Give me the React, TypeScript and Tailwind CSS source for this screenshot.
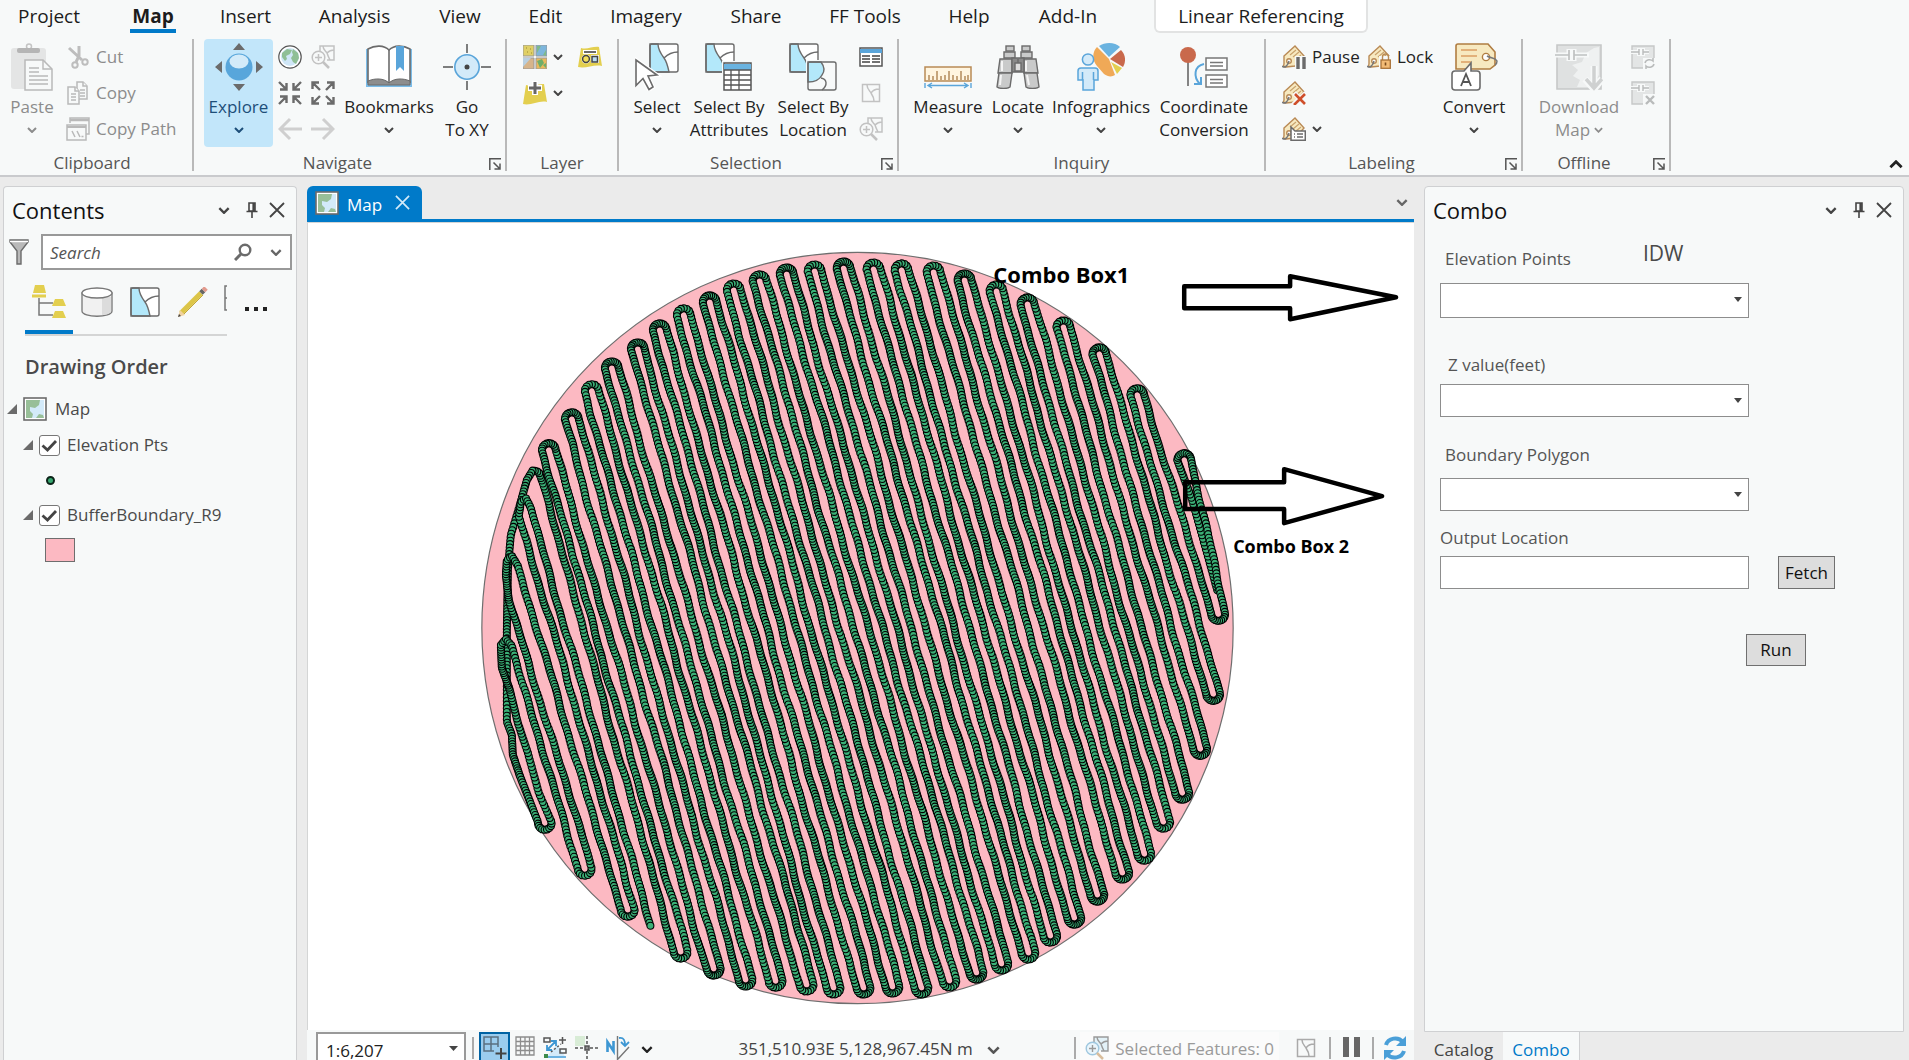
import { ReactNode, useState } from 'react';

/* ---------- small shared glyphs ---------- */

function Chevron({ className = 'w-[10px] h-[6px] text-[#444]' }: { className?: string }) {
  return (
    <svg className={className} viewBox="0 0 10 6" fill="none" stroke="currentColor" strokeWidth="2">
      <path d="M1 1l4 4 4-4" />
    </svg>
  );
}

function Pin() {
  return (
    <svg className="w-3 h-4" viewBox="0 0 12 16" fill="none" stroke="#444" strokeWidth="1.6">
      <path d="M3 1h6v8H3zM0.5 9.5h11M6 10v6" />
      <path d="M7.6 1v8" strokeWidth="2.4" />
    </svg>
  );
}

function Cross({ className = 'w-4 h-4 text-[#444]' }: { className?: string }) {
  return (
    <svg className={className} viewBox="0 0 16 16" fill="none" stroke="currentColor" strokeWidth="1.8">
      <path d="M1 1l14 14M15 1L1 15" />
    </svg>
  );
}

function Launcher() {
  return (
    <svg className="w-3 h-3" viewBox="0 0 12 12" fill="none" stroke="#555" strokeWidth="1.5">
      <path d="M0.8 12V0.8H12M4.5 4.5l6 6M11 5.5V11H5.5" />
    </svg>
  );
}

/* ---------- ribbon icons ---------- */

function PasteIcon() {
  return (
    <svg className="w-[42px] h-12" viewBox="0 0 42 48" fill="none">
      <rect x="0" y="5" width="35" height="41" rx="3" fill="#e4e5e5" />
      <circle cx="18" cy="3.500" r="2.500" stroke="#c4c4c4" strokeWidth="1.5" />
      <rect x="6" y="5" width="23" height="5" rx="2" fill="#b5b5b5" />
      <path d="M14 17h18l9 9v21H14z" fill="#f7f9f9" stroke="#b9b9b9" strokeWidth="1.5" />
      <path d="M32 17v9h9M18 25h10M18 29h10M18 33h19M18 37h19M18 41h19" stroke="#b9b9b9" strokeWidth="1.4" />
    </svg>
  );
}

function CutIcon() {
  return (
    <svg className="w-6 h-6" viewBox="0 0 24 24" fill="none" stroke="#bdbdbd" strokeWidth="2">
      <path d="M3 3l13 12M13 1v10l-3 6" strokeWidth="3" />
      <circle cx="9" cy="20" r="2.700" />
      <circle cx="19" cy="17" r="2.700" />
    </svg>
  );
}

function CopyIcon() {
  return (
    <svg className="w-6 h-6" viewBox="0 0 24 24" fill="#f7f9f9" stroke="#b9b9b9" strokeWidth="1.5">
      <path d="M11 1h6l4 4v13H11z" />
      <path d="M17 1v4h4M14 9h5M14 12h5M14 15h5" />
      <path d="M2 6h7l4 4v13H2z" />
      <path d="M9 6v4h4M5 13h5M5 16h5M5 19h5" />
    </svg>
  );
}

function CopyPathIcon() {
  return (
    <svg className="w-6 h-6" viewBox="0 0 24 24" fill="#f7f9f9" stroke="#b9b9b9" strokeWidth="1.5">
      <path d="M4 6V1h19v16h-3" />
      <path d="M4 3h19" strokeWidth="2.500" />
      <rect x="1" y="8" width="19" height="15" />
      <path d="M1 10h19" strokeWidth="2" />
      <path d="M6 14l3 6M11 14l3 6M15.500 19.500h2" />
    </svg>
  );
}

function ExploreIcon() {
  return (
    <svg className="w-12 h-12" viewBox="0 0 48 48">
      <path d="M24 0l6 7H18zM24 48l6-7H18zM0 24l7-6v12zM48 24l-7-6v12z" fill="#6b6b6b" />
      <circle cx="24" cy="24" r="13.500" fill="#58a6db" />
      <ellipse cx="24" cy="18.500" rx="9.500" ry="7" fill="#d3ebf9" />
    </svg>
  );
}

function GlobeIcon() {
  return (
    <svg className="w-6 h-6" viewBox="0 0 24 24">
      <circle cx="12" cy="12" r="11.200" fill="#fff" stroke="#555" strokeWidth="1.2" />
      <circle cx="12" cy="12" r="9" fill="#cfe6f7" />
      <path d="M4 8l5-4 5 1-2 4-4 2 1 3-2 2-3-4zM15 4l5 4 1 5-3 6-3-2-2-4 2-3-1-3z" fill="#8fbf95" />
    </svg>
  );
}

function ZoomSelIcon({ tint = '#c2c2c2' }: { tint?: string }) {
  return (
    <svg className="w-6 h-6" viewBox="0 0 24 24" fill="none" stroke={tint} strokeWidth="1.5">
      <path d="M9 7V1h14v14h-7M12 1c0 4 3 5 4 7 1 3 2 5 3 7M16 8c2-2 4-3 7-3" />
      <circle cx="7.500" cy="12.500" r="6.300" />
      <path d="M4 12.500h7M7.500 9v7" />
      <path d="M12 17l6 6" strokeWidth="2.500" />
    </svg>
  );
}

function ArrowsIn() {
  return (
    <svg className="w-6 h-6" viewBox="0 0 24 24" fill="none" stroke="#6b6b6b" strokeWidth="2.400">
      <path d="M1 1l7 7M8.500 2v6.500H2M23 1l-7 7M15.500 2v6.500H22M1 23l7-7M8.500 22v-6.500H2M23 23l-7-7M15.500 22v-6.500H22" />
    </svg>
  );
}

function ArrowsOut() {
  return (
    <svg className="w-6 h-6" viewBox="0 0 24 24" fill="none" stroke="#6b6b6b" strokeWidth="2.400">
      <path d="M2 2l7 7M1.500 8V1.500H8M22 2l-7 7M22.500 8V1.500H16M2 22l7-7M1.500 16v6.500H8M22 22l-7-7M22.500 16v6.500H16" />
    </svg>
  );
}

function ArrowIcon({ flip = false }: { flip?: boolean }) {
  return (
    <svg className={flip ? 'w-6 h-6 -scale-x-100' : 'w-6 h-6'} viewBox="0 0 24 24" fill="none" stroke="#cfcfcf" strokeWidth="3">
      <path d="M24 12H3M12 2L2 12l10 10" />
    </svg>
  );
}

function BookIcon() {
  return (
    <svg className="w-[46px] h-11" viewBox="0 0 46 44">
      <path d="M0 4h2v36h42V4h2v38H0z" fill="#7bbce8" />
      <path d="M2 4c7-4 16-4 21 1 5-5 14-5 21-1v33c-7-3-16-3-21 2-5-5-14-5-21-2z" fill="#fff" stroke="#6b6b6b" strokeWidth="1.6" />
      <path d="M2 36c7-3 16-3 21 2 5-5 14-5 21-2v4H2z" fill="#8d8d8d" stroke="#6b6b6b" strokeWidth="1" />
      <path d="M23 5v33" stroke="#6b6b6b" strokeWidth="1.6" />
      <path d="M30 1h8v25l-4-4-4 4z" fill="#5aa5da" />
    </svg>
  );
}

function GoToIcon() {
  return (
    <svg className="w-12 h-12" viewBox="0 0 48 48" fill="none">
      <path d="M24 1v9M24 38v9M0 24h10M38 24h10" stroke="#555" strokeWidth="1.5" />
      <circle cx="24" cy="24" r="12.200" fill="#d3eaf9" stroke="#5aa5da" strokeWidth="1.6" />
      <circle cx="24" cy="24" r="2.500" fill="#444" />
    </svg>
  );
}

function BasemapIcon() {
  return (
    <svg className="w-6 h-6" viewBox="0 0 24 24">
      <path d="M0 0h11v11H0z" fill="#dfcf66" stroke="#999" />
      <path d="M13 0h11v11H13z" fill="#7db6dc" stroke="#999" />
      <path d="M14 1h4l-4 7zM20 10l3-5v6z" fill="#7fb98a" />
      <path d="M0 13h11v11H0z" fill="#d6b48a" stroke="#999" />
      <path d="M0 13h8L0 22z" fill="#b8cfe0" />
      <path d="M13 13h11v11H13z" fill="#e9b95c" stroke="#999" />
      <path d="M14 16l5-2 2 4-4 5zM20 20l3-2v5z" fill="#6fae6a" />
      <path d="M3 3h1M7 4h1M4 7h1M8 8h1" stroke="#9b8a30" />
    </svg>
  );
}

function GraphicsLayerIcon() {
  return (
    <svg className="w-6 h-6" viewBox="0 0 24 24">
      <path d="M3 3c6 2 12-2 18-1l3 19c-8-2-16 3-24 1z" fill="#e3cf4f" />
      <path d="M5 7h14" stroke="#fff" strokeWidth="4" />
      <path d="M6 7h12" stroke="#444" strokeWidth="1.600" />
      <circle cx="8" cy="14" r="4.500" fill="#fff" />
      <path d="M13 10h8v8h-8z" fill="#fff" />
      <circle cx="8" cy="14" r="3.400" fill="#f1dd5a" stroke="#444" strokeWidth="1.500" />
      <rect x="14" y="11.500" width="5.500" height="5.500" fill="#b9dcf3" stroke="#444" strokeWidth="1.500" />
    </svg>
  );
}

function AddDataIcon() {
  return (
    <svg className="w-6 h-6" viewBox="0 0 24 24">
      <path d="M3 4c6 2 12-1 18-1l3 18c-8-2-16 4-24 2z" fill="#e3cf4f" />
      <path d="M12 0v14M5 7h14" stroke="#fff" strokeWidth="6" />
      <path d="M12 1v12M6 7h12" stroke="#666" strokeWidth="3" />
    </svg>
  );
}

/* the parcels square that most selection tools share */
function Parcel({ x = 0, y = 0, line = '#6b6b6b', fill = '#b3e8fa' }: { x?: number; y?: number; line?: string; fill?: string }) {
  return (
    <g transform={`translate(${x} ${y})`} stroke={line} strokeWidth="1.400" fill="none">
      <rect x="1" y="1" width="28" height="28" rx="2" fill="#fff" stroke="none" />
      <path d="M1 1h8c0 6 3 10 6 14 3 4 4 9 5 14H1z" fill={fill} />
      <path d="M15 15c4-4 8-6 14-6" />
      <rect x="1" y="1" width="28" height="28" rx="2" />
    </g>
  );
}

function SelectIcon() {
  return (
    <svg className="w-11 h-12" viewBox="0 0 44 48">
      <Parcel x={14} />
      <path d="M1 17l21 15-10 1 6 11-4 3-6-12-7 7z" fill="#fff" stroke="#fff" strokeWidth="4" />
      <path d="M1 17l21 15-9 1 5 11-4 2.500-6-11-7 7z" fill="#fff" stroke="#6b6b6b" strokeWidth="1.600" />
    </svg>
  );
}

function SelectAttrIcon() {
  return (
    <svg className="w-12 h-12" viewBox="0 0 48 48">
      <Parcel />
      <rect x="17" y="18" width="30" height="30" fill="#f7f9f9" />
      <rect x="19" y="20" width="27" height="27" fill="#fff" stroke="#555" strokeWidth="1.500" />
      <path d="M19 21h27v6H19z" fill="#6ab3e0" />
      <path d="M19 27h27M19 32h27M19 37h27M19 42h27M26 27v20M34 27v20" stroke="#555" strokeWidth="1.300" />
    </svg>
  );
}

function SelectLocIcon() {
  return (
    <svg className="w-12 h-12" viewBox="0 0 48 48">
      <Parcel />
      <rect x="17" y="17" width="31" height="31" fill="#f7f9f9" />
      <g fill="none" stroke="#6b6b6b" strokeWidth="1.400">
        <path d="M19 19h13c3 4 4 9 1 13-3 6-8 7-14 7z" fill="#b3e8fa" />
        <path d="M32 35c6 1 7 7 1 12" />
        <rect x="19" y="19" width="28" height="28" rx="2" />
      </g>
    </svg>
  );
}

function TableIcon() {
  return (
    <svg className="w-6 h-6" viewBox="0 0 24 24" fill="none">
      <rect x="1" y="3" width="22" height="18" fill="#fff" stroke="#555" strokeWidth="1.500" />
      <path d="M1 4h22v4H1z" fill="#5aa5da" />
      <path d="M3 11h8M13 11h8M3 14h8M13 14h8M3 17h8M13 17h8" stroke="#444" strokeWidth="1.500" />
    </svg>
  );
}

function ClearIcon({ tint = '#c2c2c2' }: { tint?: string }) {
  return (
    <svg className="w-6 h-6" viewBox="0 0 24 24" fill="none" stroke={tint} strokeWidth="1.500">
      <path d="M3.500 3.500h17v17h-17zM8 4c0 4 3 6 4 8 2 3 3 5 3 8M12 12c2-3 5-4 8-4" />
    </svg>
  );
}

function MeasureIcon() {
  return (
    <svg className="w-12 h-6" viewBox="0 0 48 24" fill="none">
      <rect x="1" y="2" width="46" height="14" fill="#fff5e0" stroke="#b98a55" strokeWidth="1.500" />
      <path d="M5 15v-5M9 15v-4M13 15V6M17 15v-4M21 15v-5M25 15V6M29 15v-5M33 15v-4M37 15V6M41 15v-4M44 15v-5" stroke="#a87a48" strokeWidth="1.300" />
      <path d="M1 18v5M47 18v5M5 20.500h38M8 18l-4 2.500 4 2.500M40 18l4 2.500-4 2.500" stroke="#5aa5da" strokeWidth="1.400" />
    </svg>
  );
}

function BinocularsIcon() {
  return (
    <svg className="w-11 h-11" viewBox="0 0 44 44" fill="#c9caca" stroke="#6b6b6b" strokeWidth="1.400">
      <rect x="10" y="1" width="8" height="5" />
      <rect x="26" y="1" width="8" height="5" />
      <path d="M8 7h11v6H8zM25 7h11v6H25z" />
      <path d="M4 14h12v14H2zM28 14h12l2 14H28z" />
      <path d="M3 28h13l-2 14c-3 2-10 2-13 0zM28 28h13l2 14c-3 2-10 2-13 0z" />
      <path d="M16 13h12v14H16z" fill="#8a8a8a" />
      <path d="M19 18h6v8h-6zM22 14v4" fill="#ddd" />
      <path d="M6 16v10M30 16v10M5 30l-1 10M31 30l2 10" stroke="#f4f4f4" strokeWidth="2" />
    </svg>
  );
}

function InfographicsIcon() {
  return (
    <svg className="w-12 h-12" viewBox="0 0 48 48">
      <path d="M32 16L20 4c-5 5-5 13 0 19l7 8c4 3 8 3 11 1z" fill="#f0a957" />
      <path d="M32 14L22 3c6-4 16-4 21 1z" fill="#6ab3e0" />
      <path d="M33 16l11-9c5 5 5 12 2 17z" fill="#c9694c" />
      <path d="M34 19l11 6-5 6z" fill="#e3cf4f" />
      <g fill="#d3eaf9" stroke="#5aa5da" strokeWidth="1.500">
        <circle cx="11" cy="16.500" r="5.600" />
        <path d="M4 25h14c2 0 3 1 3 3v9h-4v10H6V37H1v-9c0-2 1-3 3-3z" />
        <path d="M5.500 29v8M16.500 29v8" />
      </g>
    </svg>
  );
}

function CoordIcon() {
  return (
    <svg className="w-12 h-11" viewBox="0 0 48 44" fill="none">
      <path d="M8 14v27" stroke="#777" strokeWidth="1.800" />
      <circle cx="8" cy="10" r="8" fill="#c9694c" />
      <path d="M24 19c-10 2-11 13-4 20M21 32v7h-7" stroke="#5aa5da" strokeWidth="2" />
      <g stroke="#777" strokeWidth="1.500" fill="#fff">
        <rect x="26" y="13" width="21" height="12" />
        <rect x="26" y="30" width="21" height="12" />
        <path d="M30 17.500h13M30 21h13M30 34.500h13M30 38h13" />
      </g>
    </svg>
  );
}

function TagIcon({ kind }: { kind: 'pause' | 'lock' | 'remove' | 'more' }) {
  return (
    <svg className="w-6 h-6" viewBox="0 0 24 24" fill="none">
      <path d="M2 11L13 1l9 10-9 10-9 1c-2 0-3-1-2-3z" fill="#f7e9c0" stroke="#b98a55" strokeWidth="1.400" />
      <path d="M8 10l6-5M11 12l6-5M14 14l5-4" stroke="#c9a36d" strokeWidth="1.200" />
      <circle cx="7" cy="16" r="2.300" fill="#fff" stroke="#b98a55" strokeWidth="1.400" />
      <path d="M0 21c3 3 6-1 7-5" stroke="#777" strokeWidth="1.500" />
      {kind === 'pause' && (
        <>
          <path d="M13 11h11v13H13z" fill="#f7f9f9" />
          <path d="M16 12v12M22 12v12" stroke="#6b6b6b" strokeWidth="3.400" />
        </>
      )}
      {kind === 'lock' && (
        <>
          <path d="M12 11h12v13H12z" fill="#f7f9f9" />
          <path d="M15.500 15v-3c0-4 6-4 6 0v3" stroke="#b98a55" strokeWidth="1.400" />
          <rect x="14" y="15" width="9.300" height="8.300" fill="#f3bb76" stroke="#a87238" strokeWidth="1.300" />
          <path d="M18.500 17.500v3" stroke="#7a4b1c" strokeWidth="1.600" />
        </>
      )}
      {kind === 'remove' && (
        <>
          <path d="M12 12l11 11M24 12L11 24" stroke="#f7f9f9" strokeWidth="5" />
          <path d="M13 13l10 10M23 13L12 24" stroke="#cf4f2a" strokeWidth="2.600" />
        </>
      )}
      {kind === 'more' && (
        <>
          <path d="M9 10l4 4h10.300v9.300H9z" fill="#fff" stroke="#6b6b6b" strokeWidth="1.500" />
          <path d="M12 17h1M15 17h6M12 20h1M15 20h6" stroke="#6b6b6b" strokeWidth="1.400" />
        </>
      )}
    </svg>
  );
}

function ConvertIcon() {
  return (
    <svg className="w-12 h-12" viewBox="0 0 48 48" fill="none">
      <path d="M8 1h30l7 8v13l-5 4H6V3c0-1 1-2 2-2z" fill="#f7e9c0" stroke="#b07d42" strokeWidth="1.600" />
      <path d="M11 7h16M11 13h16M11 19h10" stroke="#dc9f63" strokeWidth="1.400" />
      <circle cx="36" cy="14" r="3.600" fill="#fff" stroke="#b07d42" strokeWidth="1.400" />
      <path d="M37 13c5 3 8 1 10 5 0 2 0 3-2 4" stroke="#777" strokeWidth="1.500" />
      <path d="M5 28h9l7-8v8h6c2 0 3 1 3 3v13c0 2-1 3-3 3H5c-2 0-3-1-3-3V31c0-2 1-3 3-3z" fill="#fff" stroke="#6b6b6b" strokeWidth="1.600" />
      <path d="M11 43l5-12 5 12M13 39h6" stroke="#555" strokeWidth="1.800" />
    </svg>
  );
}

function OfflineMap() {
  return (
    <svg className="w-12 h-12" viewBox="0 0 48 48" fill="none">
      <path d="M2 2h44v44H2z" fill="#dfe1e1" stroke="#c6c8c8" strokeWidth="1.600" />
      <path d="M44 4v28l-9 12H22l3-7-7-4 5-6-6-5 10-3 4-9 8-5z" fill="#eff1f1" />
      <path d="M0 12h34M14 6v12M19 6v12" stroke="#f7f9f9" strokeWidth="5" />
      <path d="M0 12h14M19 12h13M14 7v10M19 7v10" stroke="#bfc1c1" strokeWidth="1.700" />
      <path d="M39 23v22M30 36l9 10 8-10" stroke="#f7f9f9" strokeWidth="7" />
      <path d="M39 23v22M31 36l8 9 8-9" stroke="#cfd1d1" strokeWidth="3.500" />
    </svg>
  );
}

function OfflineSmall({ remove = false }: { remove?: boolean }) {
  return (
    <svg className="w-6 h-6" viewBox="0 0 24 24" fill="none">
      <path d="M1 1h22v22H1z" fill="#e3e5e5" stroke="#c6c8c8" strokeWidth="1.400" />
      <path d="M0 7h18M8 3v8M12 3v8" stroke="#f7f9f9" strokeWidth="4" />
      <path d="M0 7h8M12 7h6M8 4v6M12 4v6" stroke="#b9bbbb" strokeWidth="1.400" />
      <path d="M12 13h12v11H12z" fill="#f7f9f9" />
      {remove ? (
        <path d="M15 15l8 8M23 15l-8 8" stroke="#b9bbbb" strokeWidth="2.400" />
      ) : (
        <path d="M14 18c1-4 6-4 8-2V13M23 19c-1 4-6 4-8 2v3" stroke="#b9bbbb" strokeWidth="1.500" />
      )}
    </svg>
  );
}

/* ---------- ribbon building blocks ---------- */

interface BigButtonProps {
  icon: ReactNode;
  lines: string[];
  width: string;
  menu?: 'below' | 'inline';
  disabled?: boolean;
  active?: boolean;
}

function BigButton({ icon, lines, width, menu, disabled, active }: BigButtonProps) {
  const tone = disabled ? 'text-[#8c8c8c]' : active ? 'text-[#1d4e79] bg-[#c2e6fa] rounded-sm' : 'text-[#222]';
  return (
    <button type="button" disabled={disabled} className={`${width} ${tone} h-[108px] shrink-0 flex flex-col items-center`}>
      <span className="h-14 w-full flex items-center justify-center">{icon}</span>
      {lines.map((line, i) => (
        <span key={line} className="h-[23px] leading-[23px] whitespace-nowrap flex items-center gap-1">
          {line}
          {menu === 'inline' && i === lines.length - 1 && <Chevron className="w-[9px] h-[6px] text-[#8c8c8c]" />}
        </span>
      ))}
      {menu === 'below' && (
        <span className="h-[23px] flex items-center">
          <Chevron className={disabled ? 'w-[10px] h-[6px] text-[#8c8c8c]' : active ? 'w-[10px] h-[6px] text-[#1d4e79]' : undefined} />
        </span>
      )}
    </button>
  );
}

function SmallButton({ icon, label, text, disabled, menu, width = '' }: {
  icon: ReactNode;
  label: string;
  text?: boolean;
  disabled?: boolean;
  menu?: boolean;
  width?: string;
}) {
  return (
    <button
      type="button"
      aria-label={label}
      disabled={disabled}
      className={`h-9 flex items-center gap-[6px] whitespace-nowrap ${width} ${disabled ? 'text-[#8c8c8c]' : 'text-[#222]'}`}
    >
      {icon}
      {text && label}
      {menu && <Chevron />}
    </button>
  );
}

function Group({ title, width, launcher, children }: { title: string; width: string; launcher?: boolean; children: ReactNode }) {
  return (
    <section className={`${width} shrink-0 h-[132px] border-r-2 border-[#b9b9b9] flex flex-col`}>
      <div className="h-[108px] flex">{children}</div>
      <div className="h-6 flex items-start">
        <h2 className="flex-1 text-center text-[#555] leading-8">{title}</h2>
        {launcher && (
          <button type="button" aria-label={`${title} options`} className="pt-[11px] pr-1 pl-2">
            <Launcher />
          </button>
        )}
      </div>
    </section>
  );
}

const tabs = [
  { name: 'Project', width: 'w-[106px] pr-2' },
  { name: 'Map', width: 'w-[94px]' },
  { name: 'Insert', width: 'w-[91px]' },
  { name: 'Analysis', width: 'w-[127px]' },
  { name: 'View', width: 'w-[84px]' },
  { name: 'Edit', width: 'w-[87px]' },
  { name: 'Imagery', width: 'w-[114px]' },
  { name: 'Share', width: 'w-[106px]' },
  { name: 'FF Tools', width: 'w-[112px]' },
  { name: 'Help', width: 'w-[96px]' },
  { name: 'Add-In', width: 'w-[102px]' },
];

function Ribbon() {
  return (
    <header className="shrink-0 bg-[#f7f9f9] border-b-2 border-[#c9cacd]">
      <nav className="flex h-[33px] text-[19px] leading-[33px] text-[#1c1c1c]">
        {tabs.map((tab) => (
          <button key={tab.name} type="button" className={`${tab.width} shrink-0 flex justify-center`}>
            {tab.name === 'Map' ? (
              <span className="h-[33px] px-[2px] font-bold border-b-4 border-[#007ac9]">{tab.name}</span>
            ) : (
              tab.name
            )}
          </button>
        ))}
        <button type="button" className="ml-[35px] w-[214px] shrink-0 bg-white border-2 border-t-0 border-[#e2e3e3] rounded-b-md">
          Linear Referencing
        </button>
      </nav>

      <div className="flex pt-[6px] pb-1 text-[17px]">
        <Group title="Clipboard" width="w-[194px] pr-2">
          <BigButton icon={<PasteIcon />} lines={['Paste']} width="w-[64px]" menu="below" disabled />
          <div className="flex flex-col pl-[2px]">
            <SmallButton icon={<CutIcon />} label="Cut" text disabled />
            <SmallButton icon={<CopyIcon />} label="Copy" text disabled />
            <SmallButton icon={<CopyPathIcon />} label="Copy Path" text disabled />
          </div>
        </Group>

        <Group title="Navigate" width="w-[313px]" launcher>
          <div className="pl-[10px]">
            <BigButton icon={<ExploreIcon />} lines={['Explore']} width="w-[69px]" menu="below" active />
          </div>
          <div className="grid grid-cols-2 gap-x-[9px] pl-[5px]">
            <SmallButton icon={<GlobeIcon />} label="Full extent" />
            <SmallButton icon={<ZoomSelIcon />} label="Zoom to selection" disabled />
            <SmallButton icon={<ArrowsIn />} label="Fixed zoom in" />
            <SmallButton icon={<ArrowsOut />} label="Fixed zoom out" />
            <SmallButton icon={<ArrowIcon />} label="Previous extent" disabled />
            <SmallButton icon={<ArrowIcon flip />} label="Next extent" disabled />
          </div>
          <BigButton icon={<BookIcon />} lines={['Bookmarks']} width="w-[108px]" menu="below" />
          <BigButton icon={<GoToIcon />} lines={['Go', 'To XY']} width="w-[48px]" />
        </Group>

        <Group title="Layer" width="w-[112px]">
          <div className="flex flex-col pl-4">
            <div className="flex">
              <SmallButton icon={<BasemapIcon />} label="Basemap" menu width="w-[55px]" />
              <SmallButton icon={<GraphicsLayerIcon />} label="Add graphics layer" />
            </div>
            <SmallButton icon={<AddDataIcon />} label="Add data" menu />
          </div>
        </Group>

        <Group title="Selection" width="w-[280px]" launcher>
          <BigButton icon={<SelectIcon />} lines={['Select']} width="w-[76px]" menu="below" />
          <BigButton icon={<SelectAttrIcon />} lines={['Select By', 'Attributes']} width="w-[68px]" />
          <div className="pl-1">
            <BigButton icon={<SelectLocIcon />} lines={['Select By', 'Location']} width="w-[92px]" />
          </div>
          <div className="flex flex-col">
            <SmallButton icon={<TableIcon />} label="Attribute table" />
            <SmallButton icon={<ClearIcon />} label="Clear selection" disabled />
            <SmallButton icon={<ZoomSelIcon />} label="Zoom to selected" disabled />
          </div>
        </Group>

        <Group title="Inquiry" width="w-[367px]">
          <div className="flex pl-[9px]">
            <BigButton icon={<span className="pt-5"><MeasureIcon /></span>} lines={['Measure']} width="w-[80px]" menu="below" />
            <BigButton icon={<BinocularsIcon />} lines={['Locate']} width="w-[60px]" menu="below" />
            <BigButton icon={<InfographicsIcon />} lines={['Infographics']} width="w-[106px]" menu="below" />
            <BigButton icon={<CoordIcon />} lines={['Coordinate', 'Conversion']} width="w-[100px]" />
          </div>
        </Group>

        <Group title="Labeling" width="w-[257px]" launcher>
          <div className="flex flex-col pl-4">
            <div className="flex">
              <SmallButton icon={<TagIcon kind="pause" />} label="Pause" text width="w-[85px]" />
              <SmallButton icon={<TagIcon kind="lock" />} label="Lock" text width="w-[70px]" />
            </div>
            <SmallButton icon={<TagIcon kind="remove" />} label="View unplaced" />
            <SmallButton icon={<TagIcon kind="more" />} label="More labeling" menu />
          </div>
          <BigButton icon={<ConvertIcon />} lines={['Convert']} width="w-[74px]" menu="below" />
        </Group>

        <Group title="Offline" width="w-[148px]" launcher>
          <div className="pl-1">
            <BigButton icon={<OfflineMap />} lines={['Download', 'Map']} width="w-[104px]" menu="inline" disabled />
          </div>
          <div className="flex flex-col">
            <SmallButton icon={<OfflineSmall />} label="Sync" disabled />
            <SmallButton icon={<OfflineSmall remove />} label="Remove" disabled />
          </div>
        </Group>

        <div className="flex-1 flex justify-end items-end pr-[6px]">
          <button type="button" aria-label="Collapse ribbon" className="pb-[2px]">
            <Chevron className="w-[14px] h-[9px] rotate-180 text-[#222]" />
          </button>
        </div>
      </div>
    </header>
  );
}

/* ---------- docked panes ---------- */

function PaneTitle({ children }: { children: string }) {
  return (
    <div className="flex items-start h-[47px] pl-2 pr-[11px]">
      <h2 className="flex-1 text-[22px] leading-[46px] text-[#111]">{children}</h2>
      <div className="flex items-center h-[46px]">
        <button type="button" aria-label={`${children} menu`} className="w-[22px] flex justify-center">
          <Chevron className="w-3 h-[7px] text-[#444]" />
        </button>
        <button type="button" aria-label={`Auto hide ${children}`} className="w-[34px] flex justify-center">
          <Pin />
        </button>
        <button type="button" aria-label={`Close ${children}`}>
          <Cross />
        </button>
      </div>
    </div>
  );
}

function MapThumb() {
  return (
    <svg className="w-6 h-6 shrink-0" viewBox="0 0 24 24">
      <rect x="1" y="1" width="22" height="22" fill="#fff" stroke="#6b6b6b" strokeWidth="1.600" />
      <path d="M3 3h18v18H3z" fill="#d3eaf9" />
      <path d="M3 3h14l-1 5-4 3-5-1v4l3 3-1 4H3zM13 21l3-4 4 1 1 3z" fill="#98bf98" />
    </svg>
  );
}

function Expander() {
  return (
    <svg className="w-[10px] h-[10px] shrink-0" viewBox="0 0 10 10">
      <path d="M10 0v10H0z" fill="#6b6b6b" />
    </svg>
  );
}

function LayerRow({ name }: { name: string }) {
  const [checked, setChecked] = useState(true);
  return (
    <div className="flex items-center h-9 pl-[19px]">
      <button type="button" aria-label={`Collapse ${name}`}>
        <Expander />
      </button>
      <label className="flex items-center gap-[7px] pl-[6px]">
        <span className="relative w-[21px] h-[21px]">
          <input
            type="checkbox"
            checked={checked}
            onChange={(e) => setChecked(e.target.checked)}
            className="block appearance-none w-[21px] h-[21px] bg-white border border-[#777] rounded-[3px]"
          />
          {checked && (
            <svg className="absolute inset-0 pointer-events-none" viewBox="0 0 21 21" fill="none" stroke="#444" strokeWidth="2.800">
              <path d="M3.500 10.500l5 4.500 8.500-9" />
            </svg>
          )}
        </span>
        {name}
      </label>
    </div>
  );
}

function ListByOrderIcon() {
  return (
    <svg className="w-[34px] h-[34px]" viewBox="0 0 34 34">
      <path d="M3 0h9l2 8H1zM0 9.500h14v3H0z" fill="#e3cf4f" />
      <path d="M7 13v17h14M7 18h14" fill="none" stroke="#777" strokeWidth="1.500" />
      <path d="M23 14h8l3 7H20zM23 26h8l3 7H20z" fill="#e3cf4f" />
    </svg>
  );
}

function ContentsPane() {
  return (
    <aside className="w-[294px] shrink-0 bg-[#f7f9f9] border border-b-0 border-[#cfd0d2] rounded-t text-[17px] text-[#4a4a4a]">
      <PaneTitle>Contents</PaneTitle>
      <div className="flex items-center pl-[5px] pr-1">
        <svg className="w-5 h-[26px]" viewBox="0 0 20 26" fill="#b9b9b9" stroke="#6b6b6b" strokeWidth="1.400">
          <path d="M1 1h18v2l-7 9v13H8V12L1 3z" />
          <path d="M1 2.500h18" stroke="#fff" />
        </svg>
        <label className="ml-3 flex-1 h-9 flex items-center bg-white border-2 border-[#999] pr-2">
          <input
            type="text"
            placeholder="Search"
            aria-label="Search contents"
            className="w-0 flex-1 h-8 pl-[7px] italic outline-none placeholder:text-[#555]"
          />
          <svg className="w-[18px] h-[18px]" viewBox="0 0 18 18" fill="none" stroke="#6b6b6b">
            <circle cx="11" cy="7" r="5.300" strokeWidth="2.400" />
            <path d="M7 11l-6 6" strokeWidth="3" />
          </svg>
          <Chevron className="ml-[18px] w-3 h-[7px] text-[#666]" />
        </label>
      </div>

      <div className="flex pl-[21px] pt-3">
        <div className="w-[202px] flex border-b-2 border-[#d4d5d5] overflow-hidden">
          <button type="button" aria-label="List by drawing order" className="w-12 h-[52px] shrink-0 pb-2 flex items-center justify-center border-b-4 border-[#007ac9]">
            <ListByOrderIcon />
          </button>
          <button type="button" aria-label="List by source" className="w-12 h-[52px] shrink-0 pb-3 flex items-center justify-center">
            <svg className="w-8 h-[30px]" viewBox="0 0 32 30" stroke="#777" strokeWidth="1.300">
              <path d="M1 6v18c0 7 30 7 30 0V6z" fill="#f1f1f1" />
              <path d="M21 10h9v15c-2 2-5 3-9 3z" fill="#dcdcdc" stroke="none" />
              <ellipse cx="16" cy="6" rx="15" ry="5" fill="#fff" />
            </svg>
          </button>
          <button type="button" aria-label="List by selection" className="w-12 h-[52px] shrink-0 pb-3 flex items-center justify-center">
            <svg className="w-[30px] h-[30px]" viewBox="0 0 30 30">
              <Parcel />
            </svg>
          </button>
          <button type="button" aria-label="List by editing" className="w-12 h-[52px] shrink-0 pb-3 flex items-center justify-center">
            <svg className="w-[30px] h-[30px]" viewBox="0 0 30 30" fill="none">
              <path d="M3 26L23 6" stroke="#dcc548" strokeWidth="5" />
              <path d="M5 28L25 8" stroke="#c2a63a" strokeWidth="1" />
              <path d="M0 30l2-7 5 5z" fill="#f0d2a0" />
              <path d="M0 30l1-3 2 2z" fill="#444" />
              <path d="M23 6l2.500-2.500" stroke="#666" strokeWidth="5" />
              <path d="M25.500 3.500L28 1" stroke="#e29a8d" strokeWidth="5" />
            </svg>
          </button>
          <button type="button" aria-label="List by snapping" className="w-12 h-[52px] shrink-0 pl-[7px] pb-5 flex items-center">
            <svg className="w-6 h-[26px]" viewBox="0 0 24 26" fill="none" stroke="#777" strokeWidth="1.500">
              <path d="M8 1H1v24h7M1 13h7" />
            </svg>
          </button>
        </div>
        <button type="button" aria-label="More lists" className="ml-[18px] flex items-center gap-[5px]">
          <span className="w-1 h-1 bg-[#222]" />
          <span className="w-1 h-1 bg-[#222]" />
          <span className="w-1 h-1 bg-[#222]" />
        </button>
      </div>

      <h3 className="pl-[21px] pt-[17px] text-[20px] leading-7 font-semibold">Drawing Order</h3>

      <div className="pt-[10px]">
        <div className="flex items-center h-9 pl-[3px]">
          <button type="button" aria-label="Collapse Map">
            <Expander />
          </button>
          <span className="pl-[6px] pr-2">
            <MapThumb />
          </span>
          Map
        </div>
        <LayerRow name="Elevation Pts" />
        <div className="h-[34px] pl-[42px] flex items-center">
          <span className="w-[9px] h-[9px] rounded-full bg-[#38a871] border-2 border-[#0c2419]" />
        </div>
        <LayerRow name="BufferBoundary_R9" />
        <div className="h-[34px] pl-[41px] flex items-center">
          <span className="w-[30px] h-6 bg-[#fcb9c2] border border-[#6e6e6e]" />
        </div>
      </div>
    </aside>
  );
}

/* ---------- map view ---------- */

// End rows of the swath, east to west: [x, y] of each headland turn
const topTurns = [
  [1184, 449], [1137, 384], [1099, 343], [1063, 316], [1027, 293], [996, 280], [964, 269], [933, 261],
  [901, 259], [873, 258], [843, 257], [814, 260], [786, 263], [759, 270], [733, 279], [709, 291],
  [683, 304], [659, 319], [637, 338], [611, 357], [591, 380], [571, 408], [548, 439],
];

const bottomTurns = [
  [1218, 623], [1213, 703], [1200, 758], [1182, 802], [1163, 831], [1144, 863], [1122, 882], [1097, 904],
  [1074, 927], [1050, 945], [1028, 962], [1001, 973], [976, 982], [949, 990], [921, 997], [892, 996],
  [863, 997], [833, 997], [806, 994], [775, 990], [745, 989], [713, 978], [680, 961],
];

const TURN = 7;

function turn(x: number, y: number, up: boolean, reverse = false): number[][] {
  const pts: number[][] = [];
  for (let i = 0; i <= 8; i++) {
    const a = (Math.PI * i) / 8;
    const dy = 4 + TURN - TURN * Math.sin(a);
    pts.push([x + TURN * Math.cos(a), up ? y + dy : y - dy]);
  }
  return reverse ? pts.reverse() : pts;
}

function track(): number[][] {
  let pts: number[][] = [[1217, 590], [1192, 500]];
  topTurns.forEach(([x, y], i) => {
    pts = pts.concat(turn(x, y, true, i === 0));
    const [bx, by] = bottomTurns[i];
    pts = pts.concat(turn(bx, by + 2, false));
  });
  return pts.concat(
    // last full turn, then down the western headland
    [[542, 483], [538, 472], [532, 470], [526, 480], [519, 505], [510, 535], [507, 570], [506, 632], [506, 722], [511, 735], [512, 755], [519, 776], [537, 822]],
    turn(544, 834, false, true),
    [[538, 793], [527, 753], [517, 723], [509, 690], [501, 668], [500, 645], [505, 639], [511, 646]],
    turn(584, 880, false, true),
    [[508, 600], [505, 575], [506, 560], [511, 556], [517, 566]],
    turn(627, 921, false, true),
    [[518, 516], [520, 502], [525, 498], [530, 508], [650, 927]],
  );
}

// Small GPS drift that differs from row to row
function drift(s: number): number {
  return 0.5 * Math.sin(s / 17.3) + 0.8 * Math.sin(s / 41.7 + 1.3) * Math.sin(s / 97.1) + 0.4 * Math.sin(s / 6.7);
}

// Walks the track and drops one GPS fix about every three pixels
function samplePoints(): string {
  const line = track();
  const out: string[] = [];
  let travelled = 0;
  let next = 0;
  for (let i = 1; i < line.length; i++) {
    const [ax, ay] = line[i - 1];
    const [bx, by] = line[i];
    const len = Math.hypot(bx - ax, by - ay);
    if (len === 0) continue;
    while (next <= travelled + len) {
      const along = next - travelled;
      const t = along / len;
      const ease = Math.min(1, along / 25, (len - along) / 25);
      const dx = len > 100 ? ease * drift(next) : 0;
      out.push(`${(ax + (bx - ax) * t + dx).toFixed(1)},${(ay + (by - ay) * t).toFixed(1)}`);
      next += (len > 30 ? 3.3 : 2.6) + 0.4 * Math.sin(next / 31);
    }
    travelled += len;
  }
  return out.join(' ');
}

const fixes = samplePoints();

function MapCanvas() {
  return (
    <svg className="w-full h-full" viewBox="307 223 1107 807" fontFamily="'Open Sans', 'Noto Sans', sans-serif" fontWeight="700">
      <defs>
        <marker id="fix" markerUnits="userSpaceOnUse" markerWidth="10" markerHeight="10" refX="5" refY="5">
          <circle cx="5" cy="5" r="3.500" fill="#3bb077" stroke="#000" strokeWidth="1.100" />
        </marker>
      </defs>
      <circle cx="857" cy="628" r="376" fill="#fcb9c2" stroke="#6e6e6e" strokeWidth="1.200" />
      <polyline points={fixes} fill="none" markerStart="url(#fix)" markerMid="url(#fix)" markerEnd="url(#fix)" />
      <g fill="none" stroke="#000" strokeWidth="4.500" strokeLinejoin="round">
        <path d="M1184 286h106v-10l106 21-106 22v-11h-106z" />
        <path d="M1185 482h99v-13l98 27-98 27v-14h-99z" />
      </g>
      <text x="993" y="283" fontSize="22">Combo Box1</text>
      <text x="1233" y="553" fontSize="18">Combo Box 2</text>
    </svg>
  );
}

function Divider() {
  return <span className="w-[2px] h-[22px] mt-[5px] bg-[#aaa]" />;
}

function StatusBar() {
  return (
    <footer className="h-[30px] shrink-0 overflow-hidden bg-[#f7f9f9] flex justify-between items-start pl-[9px] pr-[7px] pt-[2px] text-[17px] leading-[34px] text-[#444]">
      <div className="flex items-start">
        <span className="relative w-[150px]">
          <select aria-label="Map scale" className="appearance-none w-[150px] h-[34px] pl-2 bg-white border-2 border-[#999] text-[#222]">
            <option>1:6,207</option>
          </select>
          <svg className="absolute right-2 top-[14px] w-[9px] h-[5px] pointer-events-none" viewBox="0 0 9 5">
            <path d="M0 0h9L4.500 5z" fill="#444" />
          </svg>
        </span>
        <span className="w-[13px] flex justify-center">
          <Divider />
        </span>
        <button type="button" aria-label="Snapping grid" className="w-[31px] h-[34px] bg-[#9bccee] border-2 border-[#0062a3] flex justify-center pt-[2px]">
          <svg className="w-6 h-6" viewBox="0 0 24 24" fill="none" stroke="#5b6f80" strokeWidth="1.500">
            <path d="M1 1h14v14H1zM8 1v14M1 8h14" />
            <path d="M11 11h13v13H11z" fill="#9bccee" stroke="none" />
            <path d="M18 12v11M12.500 17.500h11" stroke="#444" strokeWidth="2" />
          </svg>
        </button>
        <button type="button" aria-label="Grid" className="ml-[5px] pt-1">
          <svg className="w-5 h-5" viewBox="0 0 20 20" fill="none" stroke="#8d8d8d" strokeWidth="1.300">
            <path d="M1 1h18v18H1zM5.500 1v18M10 1v18M14.500 1v18M1 5.500h18M1 10h18M1 14.500h18" />
          </svg>
        </button>
        <button type="button" aria-label="Dynamic constraints" className="ml-2 pt-1">
          <svg className="w-6 h-6" viewBox="0 0 24 24" fill="none" stroke="#555" strokeWidth="1.500">
            <path d="M3 22L14 8l9 14z" fill="#d3eaf9" stroke="none" />
            <path d="M1 2h6v4H1zM16 4h7M19.500 1v7M17 13h6v4h-6z" />
            <path d="M4 14l9-9M8 5h5v5M4 9v5h5" stroke="#3d97d3" strokeWidth="1.800" />
            <path d="M8 16l10-8" strokeDasharray="2 2" />
            <path d="M5 21h18" stroke="#4a9fd8" />
            <path d="M1 18h4v4H1z" fill="#3d8b4b" stroke="none" />
          </svg>
        </button>
        <button type="button" aria-label="Ground to grid" className="ml-2 pt-1">
          <svg className="w-6 h-6" viewBox="0 0 24 24" fill="none" stroke="#555" strokeWidth="1.500">
            <path d="M0 0h10v10H0z" fill="#d8ecd6" stroke="none" />
            <path d="M12 0v24M0 12h24" strokeDasharray="3 2" />
            <path d="M10 10h4v4h-4z" fill="#8d8d8d" />
          </svg>
        </button>
        <button type="button" aria-label="North reference" className="ml-[7px] pt-1">
          <svg className="w-6 h-6" viewBox="0 0 24 24" fill="none">
            <path d="M1.500 16V6l6 9V5" stroke="#3d97d3" strokeWidth="2.600" />
            <path d="M11.500 0v24M12 23l11-12" stroke="#777" strokeWidth="1.400" />
            <path d="M13 2c5-1 6 3 6 7M15 6l4 4 4-4" stroke="#3d97d3" strokeWidth="1.800" />
          </svg>
        </button>
        <button type="button" aria-label="More constraints" className="ml-[11px] pt-[14px]">
          <Chevron className="w-3 h-[7px] text-[#222]" />
        </button>
        <span className="ml-[11px]">
          <Divider />
        </span>
      </div>

      <div className="flex items-start">
        <span className="whitespace-nowrap">351,510.93E 5,128,967.45N m</span>
        <button type="button" aria-label="Coordinate units" className="ml-[14px] pt-[14px]">
          <Chevron className="w-[13px] h-2 text-[#555]" />
        </button>
      </div>

      <div className="flex items-start">
        <Divider />
        <button type="button" disabled className="ml-1 px-[5px] flex bg-[#fbfbfb] text-[#9a9a9a] whitespace-nowrap">
          <span className="pt-1 pr-[6px]">
            <svg className="w-6 h-6" viewBox="0 0 24 24" fill="none" stroke="#9a9a9a" strokeWidth="1.400">
              <path d="M9 7V1h14v14h-7M12 1c0 4 3 5 4 7 1 3 2 5 3 7M16 8c2-2 4-3 7-3" fill="#e3f2f8" />
              <circle cx="7.500" cy="12.500" r="6.300" fill="#eaf5fb" stroke="#9fc7df" />
              <path d="M4 12.500h7M7.500 9v7" />
              <path d="M12 17l6 6" stroke="#d9bd9c" strokeWidth="2.500" />
            </svg>
          </span>
          Selected Features: 0
        </button>
        <span className="ml-1">
          <Divider />
        </span>
        <button type="button" aria-label="Clear selected" disabled className="mx-[11px] pt-1">
          <ClearIcon tint="#aaa" />
        </button>
        <Divider />
        <button type="button" aria-label="Pause drawing" className="mx-[12px] mt-[5px] flex gap-[5px]">
          <span className="w-[6px] h-5 bg-[#666]" />
          <span className="w-[6px] h-5 bg-[#666]" />
        </button>
        <Divider />
        <button type="button" aria-label="Refresh" className="ml-[9px] pt-1">
          <svg className="w-6 h-6" viewBox="0 0 24 24" fill="none" stroke="#4a9fd8" strokeWidth="4">
            <path d="M3 9c2-7 12-9 17-3M21 15c-2 7-12 9-17 3" />
            <path d="M23 0v10H13zM1 24V14h10z" fill="#4a9fd8" stroke="none" />
          </svg>
        </button>
      </div>
    </footer>
  );
}

function MapView() {
  return (
    <main className="flex-1 min-w-0 flex flex-col">
      <div className="h-[33px] shrink-0 flex items-center justify-between pr-[6px]">
        <div className="w-[115px] h-[33px] flex items-center bg-[#007ac9] rounded-t-md text-white text-[17px] pl-2">
          <MapThumb />
          <span className="pl-2 pt-1 flex-1">Map</span>
          <button type="button" aria-label="Close map" className="pr-3">
            <Cross className="w-[15px] h-[15px] text-[#d3eaf9]" />
          </button>
        </div>
        <button type="button" aria-label="View list">
          <Chevron className="w-3 h-[7px] text-[#666]" />
        </button>
      </div>
      <div className="h-[3px] shrink-0 bg-[#007ac9]" />
      <div className="flex-1 min-h-0 bg-white border-t border-l border-[#d4d5d5]">
        <MapCanvas />
      </div>
      <StatusBar />
    </main>
  );
}

/* ---------- Combo pane ---------- */

function ComboSelect({ id, height }: { id: string; height: string }) {
  return (
    <div className="relative w-[309px]">
      <select id={id} className={`${height} block appearance-none w-full bg-white border border-[#8d8d8d]`} />
      <svg className="absolute right-[7px] top-[14px] w-[8px] h-[5px] pointer-events-none" viewBox="0 0 8 5">
        <path d="M0 0h8L4 5z" fill="#444" />
      </svg>
    </div>
  );
}

function ComboPane() {
  return (
    <aside className="w-[480px] shrink-0 flex flex-col text-[17px] text-[#555]">
      <div className="flex-1 bg-[#f7f9f9] border border-[#cfd0d2] rounded-t">
        <PaneTitle>Combo</PaneTitle>
        <form className="pl-[15px]" onSubmit={(e) => e.preventDefault()}>
          <div className="flex pl-[5px]">
            <label htmlFor="points" className="w-[198px] h-[49px] pt-[13px] leading-6">Elevation Points</label>
            <span className="text-[21px] leading-[38px] text-[#4a4a4a]">IDW</span>
          </div>
          <ComboSelect id="points" height="h-[35px]" />

          <label htmlFor="zvalue" className="block pl-2 pt-[35px] pb-[7px] leading-6">Z value(feet)</label>
          <ComboSelect id="zvalue" height="h-[33px]" />

          <label htmlFor="boundary" className="block pl-[5px] pt-[26px] pb-[11px] leading-6">Boundary Polygon</label>
          <ComboSelect id="boundary" height="h-[33px]" />

          <label htmlFor="output" className="block pt-[15px] pb-[6px] leading-6">Output Location</label>
          <div className="flex gap-[29px]">
            <input id="output" type="text" className="w-[309px] h-[33px] px-2 bg-white border border-[#8d8d8d]" />
            <button type="button" className="w-[57px] h-[33px] bg-[#ddd] border border-[#707070] text-[#111]">Fetch</button>
          </div>
          <button type="submit" className="ml-[306px] mt-[45px] w-[60px] h-8 bg-[#ddd] border border-[#707070] text-[#111]">Run</button>
        </form>
      </div>
      <div className="h-7 shrink-0 flex overflow-hidden leading-9">
        <button type="button" className="w-[79px] text-[#444]">Catalog</button>
        <button type="button" className="w-[77px] bg-[#f7f9f9] text-[#007ac9] border-r border-[#cfd0d2]">Combo</button>
      </div>
    </aside>
  );
}

export default function App() {
  return (
    <div className="h-screen flex flex-col overflow-hidden bg-[#ebebeb] font-['Open_Sans','Noto_Sans',sans-serif]">
      <Ribbon />
      <div className="flex-1 min-h-0 flex gap-[10px] pt-[9px] pl-[3px] pr-[5px]">
        <ContentsPane />
        <MapView />
        <ComboPane />
      </div>
    </div>
  );
}
